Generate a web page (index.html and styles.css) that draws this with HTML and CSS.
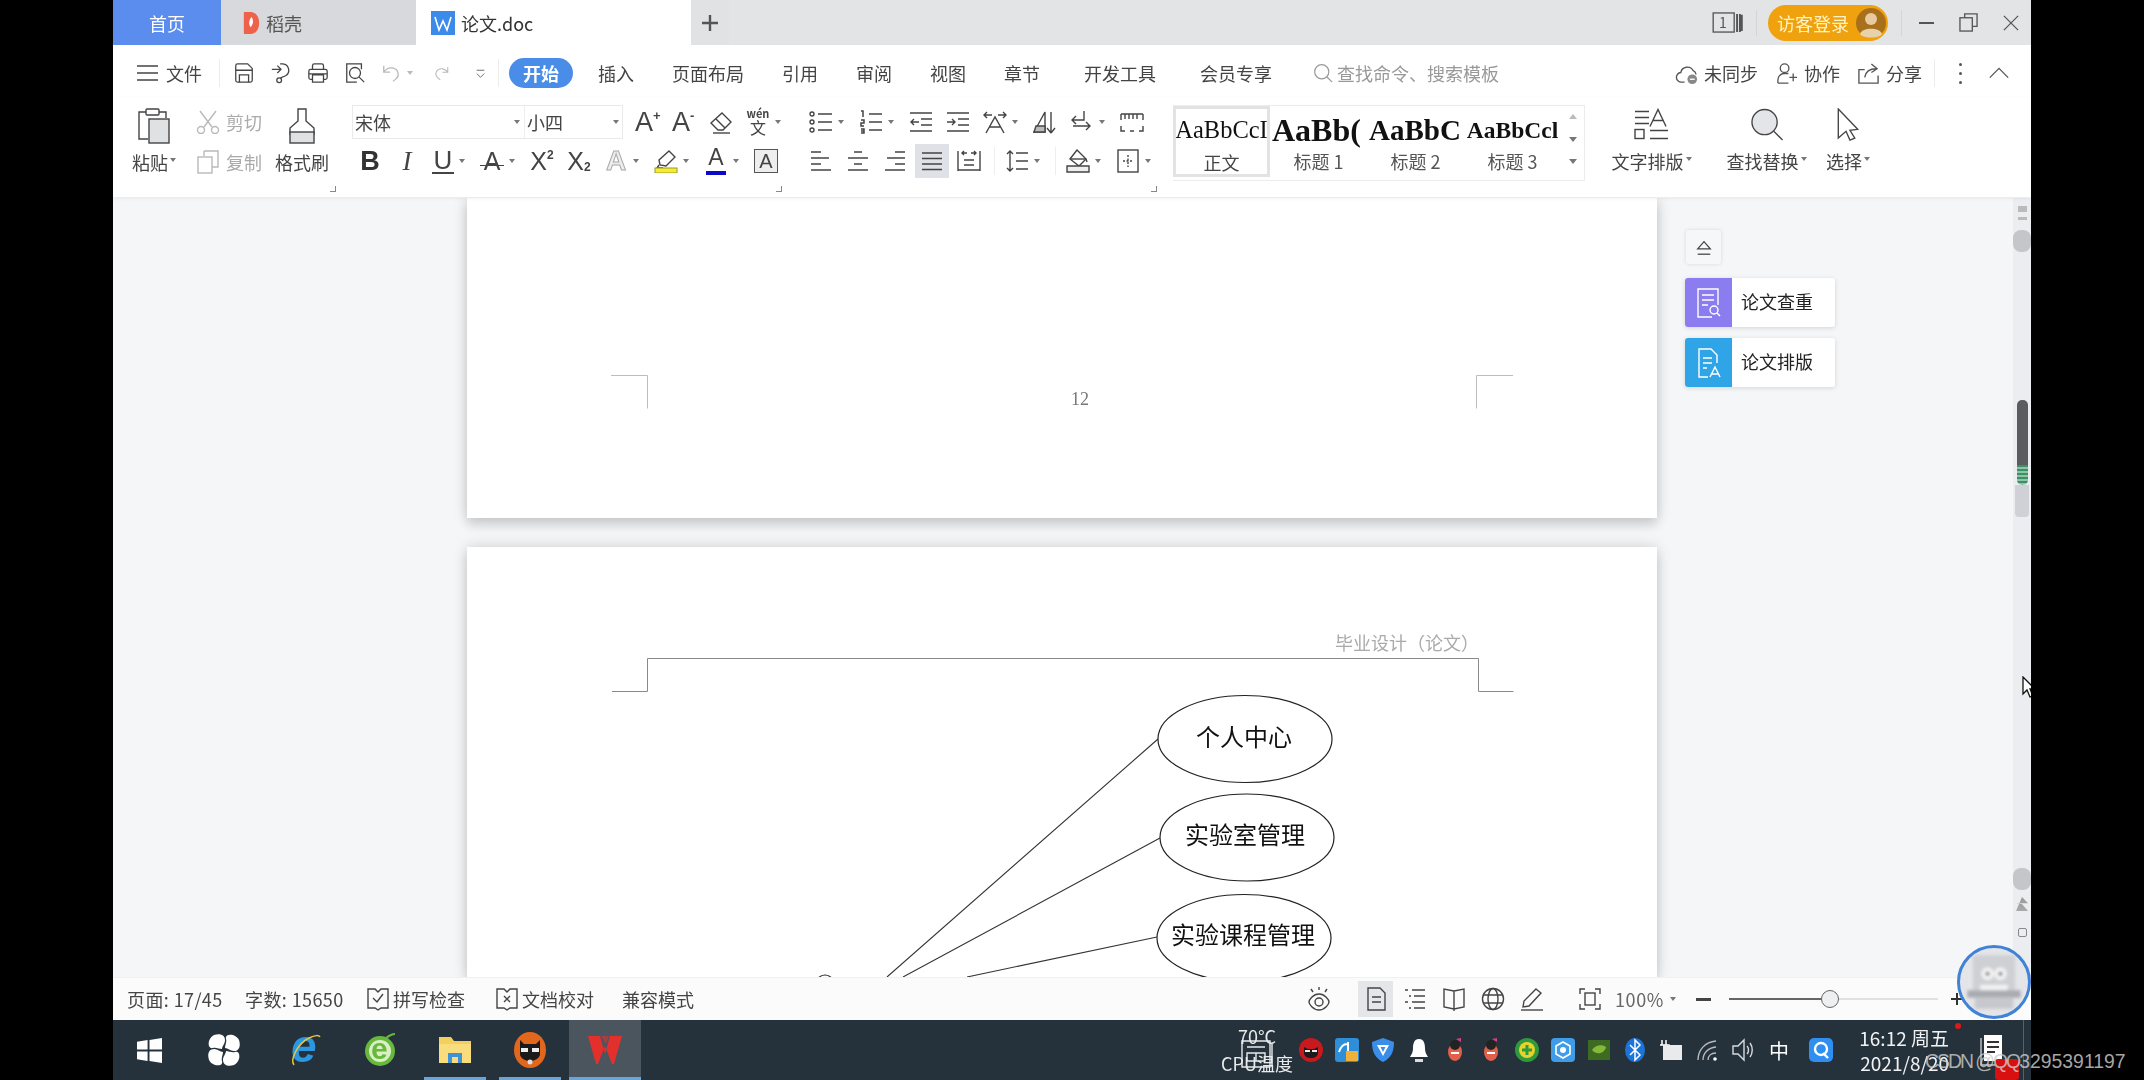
FILE: index.html
```html
<!DOCTYPE html>
<html lang="zh-CN">
<head>
<meta charset="utf-8">
<title>论文.doc</title>
<link rel="stylesheet" href="styles.css">
</head>
<body>
<svg class="sprite" aria-hidden="true">
  <symbol id="save" viewBox="0 0 24 24"><path d="M5 2h11l5 5v13a2 2 0 0 1-2 2H5a2 2 0 0 1-2-2V4a2 2 0 0 1 2-2z"/><path d="M3 9h18M7 22v-8h10v8"/></symbol>
  <symbol id="outp" viewBox="0 0 24 24"><path d="M2 8h10M8 4l4 4-4 4"/><path d="M11 2h3a7 7 0 0 1 3 13l-5 2v1"/><circle cx="10" cy="20" r="2.6"/></symbol>
  <symbol id="print" viewBox="0 0 24 24"><path d="M6 8V4a2 2 0 0 1 2-2h8a2 2 0 0 1 2 2v4"/><path d="M6 19H4a2 2 0 0 1-2-2v-7a2 2 0 0 1 2-2h16a2 2 0 0 1 2 2v7a2 2 0 0 1-2 2h-2"/><path d="M2 13h20M6 14h12v8H6z"/></symbol>
  <symbol id="preview" viewBox="0 0 24 24"><path d="M19 8V2H3v20h11"/><circle cx="12" cy="12" r="6"/><path d="M16.5 16.5L22 22"/></symbol>
  <symbol id="undo" viewBox="0 0 24 24"><path d="M3 4v7h7M3 11c4-6 12-6 15-1 2 4 0 8-5 11"/></symbol>
  <symbol id="redo" viewBox="0 0 24 24"><path d="M21 4v7h-7M21 11c-4-6-12-6-15-1-2 4 0 8 5 11"/></symbol>
  <symbol id="custom" viewBox="0 0 24 24"><path d="M5 6h14M5 12l7 7 7-7"/></symbol>
  <symbol id="search" viewBox="0 0 24 24"><circle cx="10.5" cy="10.5" r="8.5"/><path d="M16.5 16.5L23 23"/></symbol>
  <symbol id="cloud" viewBox="0 0 24 24"><path d="M10 21H7a5 5 0 0 1-1-10 7 7 0 0 1 13-2 5 5 0 0 1 3 4"/><circle cx="18" cy="18" r="5" fill="#888" stroke="none"/><path d="M15.5 18h5" stroke="#fff"/></symbol>
  <symbol id="collab" viewBox="0 0 24 24"><circle cx="10" cy="6.500" r="4.500"/><path d="M3 22v-3a7 7 0 0 1 6-7h5"/><path d="M3 22h11M19 12v8M15 16h8"/></symbol>
  <symbol id="share" viewBox="0 0 24 24"><path d="M8 8H2v14h20v-8"/><path d="M8 16c1-6 5-9 12-9M15 2l6 5-6 4"/></symbol>
  <symbol id="up" viewBox="0 0 24 24"><path d="M2 17l10-10 10 10"/></symbol>
  <symbol id="deck" viewBox="0 0 32 22"><rect x="1" y="1" width="22" height="20"/><path d="M26 2v19M29 2v19M31 3v17" stroke-width="2"/></symbol>
  <symbol id="restore" viewBox="0 0 20 20"><path d="M6 5V1h13v13h-5"/><rect x="1" y="5" width="13" height="14"/></symbol>
  <symbol id="close" viewBox="0 0 18 18"><path d="M1 1l16 16M17 1L1 17"/></symbol>
  <symbol id="paste" viewBox="0 0 32 36"><path d="M8 4H1v27h9"/><path d="M21 4h7v6"/><rect x="8" y="1" width="13" height="6" rx="1"/><rect x="11" y="11" width="20" height="24" fill="#e0e1e3"/></symbol>
  <symbol id="cut" viewBox="0 0 24 24"><path d="M4 1l12 16M20 1L8 17"/><circle cx="5" cy="20" r="3.500"/><circle cx="19" cy="20" r="3.500"/></symbol>
  <symbol id="copy" viewBox="0 0 24 24"><path d="M8 1h14v16H16"/><path d="M8 1v5"/><rect x="2" y="7" width="14" height="16"/></symbol>
  <symbol id="brush" viewBox="0 0 30 36"><path d="M11 1h8v12l8 7v6H3v-6l8-7z"/><rect x="3" y="24" width="24" height="11" fill="#e0e1e3"/></symbol>
  <symbol id="eraser" viewBox="0 0 24 24"><path d="M13 3l9 9-8 8H9l-7-7z"/><path d="M7 9l9 9" /><path d="M4 23h17"/></symbol>
  <symbol id="highlight" viewBox="0 0 24 24"><path d="M15 2l6 6-9 9-6-1-1-5z"/><path d="M5 16l-2 3h6" /><rect x="1" y="19" width="22" height="5" fill="#f4ec2c" stroke="#9a9a30" stroke-width="1"/></symbol>
  <symbol id="bullets" viewBox="0 0 24 24"><circle cx="3" cy="4" r="2"/><circle cx="3" cy="12" r="2"/><circle cx="3" cy="20" r="2"/><path d="M9 4h14M9 12h14M9 20h14"/></symbol>
  <symbol id="numbers" viewBox="0 0 24 24"><path d="M2 1h2v6M2 10h3v3H2v3h3M2 19h3v2H2m3 0v2H2M10 4h13M10 12h13M10 20h13" stroke-width="1.500"/></symbol>
  <symbol id="outdent" viewBox="0 0 24 24"><path d="M1 3h22M12 9h11M12 15h11M1 21h22M10 12H2M5 9l-3 3 3 3"/></symbol>
  <symbol id="indent" viewBox="0 0 24 24"><path d="M1 3h22M12 9h11M12 15h11M1 21h22M1 12h8M6 9l3 3-3 3"/></symbol>
  <symbol id="xa" viewBox="0 0 24 24"><path d="M3 23L12 7l9 16M6 17h12M1 5h8M4 2L1 5l3 3M15 5h8M20 2l3 3-3 3"/></symbol>
  <symbol id="sort" viewBox="0 0 24 24"><path d="M1 22L12 2v20z"/><path d="M3 16h9v6H1z" fill="#bbb"/><path d="M18 2v20M18 23l-4-5M18 23l4-5"/></symbol>
  <symbol id="return" viewBox="0 0 24 24"><path d="M14 1v9H2M6 6l-4 4 4 4M3 16h17M16 12l4 4-4 4"/></symbol>
  <symbol id="ruler" viewBox="0 0 24 24"><path d="M1 4h22M1 4v6M5 4v5M9 4v5M13 4v5M17 4v5M23 4v6M1 16v5h4M23 16v5h-4M10 21h4"/></symbol>
  <symbol id="aleft" viewBox="0 0 24 24"><path d="M2 3h10M2 9h18M2 15h10M2 21h20"/></symbol>
  <symbol id="acenter" viewBox="0 0 24 24"><path d="M8 3h8M2 9h20M8 15h8M2 21h20"/></symbol>
  <symbol id="aright" viewBox="0 0 24 24"><path d="M12 3h10M4 9h18M12 15h10M2 21h20"/></symbol>
  <symbol id="ajust" viewBox="0 0 24 24"><path d="M2 4h20M2 9.500h20M2 15h20M2 20.500h20" stroke-width="1.700"/></symbol>
  <symbol id="distribute" viewBox="0 0 24 24"><path d="M1 2v20M23 2v20M5 4h5M19 4h-5M7 2L5 4l2 2M17 2l2 2-2 2M7 11h10M7 16h10M1 21h22"/></symbol>
  <symbol id="spacing" viewBox="0 0 24 24"><path d="M5 2v20M2 5l3-3 3 3M2 19l3 3 3-3M11 4h12M11 12h12M11 20h12"/></symbol>
  <symbol id="shading" viewBox="0 0 24 24"><path d="M11 1l9 9-7 7-9-7z"/><path d="M4 10h16"/><path d="M1 17h22v6H1z" fill="#eee"/><path d="M20 10l1 3" /></symbol>
  <symbol id="borders" viewBox="0 0 24 24"><rect x="2" y="1" width="20" height="22"/><path d="M12 6v12M7 12h10" stroke-dasharray="2 1.500"/></symbol>
  <symbol id="layout" viewBox="0 0 36 32"><path d="M1 3h14M1 9h14M1 15h14M16 18L24 1l8 17M19 12h10"/><rect x="1" y="21" width="9" height="9"/><path d="M16 22h18M16 30h18"/></symbol>
  <symbol id="bigsearch" viewBox="0 0 34 34"><circle cx="14.500" cy="14.500" r="13" fill="#e4e5e8"/><path d="M24 24l9 9"/></symbol>
  <symbol id="pointer" viewBox="0 0 24 34"><path d="M2 1l20 21-8 1 5 8-5 2-4-9-8 7z"/></symbol>
  <symbol id="eject" viewBox="0 0 20 24"><path d="M3 14l7-8 7 8z"/><path d="M3 20h14"/></symbol>
  <symbol id="docq" viewBox="0 0 26 32"><path d="M16 30H2V2h20v16M6 8h12M6 13h12M6 18h6"/><circle cx="18" cy="23" r="4"/><path d="M21 26l3 3"/></symbol>
  <symbol id="doca" viewBox="0 0 26 32"><path d="M12 30H3V2h12l6 6v8M7 11h9M7 16h9M7 21h4"/><path d="M14 30l5-10 5 10M16 27h6"/></symbol>
  <symbol id="spell" viewBox="0 0 24 24"><path d="M2 2h7l3 3 3-3h7v19H15l-3 2-3-2H2z"/><path d="M7 11l4 4 6-8"/></symbol>
  <symbol id="proof" viewBox="0 0 24 24"><path d="M2 2h7l3 3 3-3h7v19H15l-3 2-3-2H2z"/><path d="M9 9l6 6M15 9l-6 6"/></symbol>
  <symbol id="eye" viewBox="0 0 24 24"><path d="M12 7c6 0 10 6 10 8s-4 8-10 8S2 17 2 15s4-8 10-8z"/><circle cx="12" cy="15" r="4"/><path d="M4 2l2 3M12 0v3M20 2l-2 3"/></symbol>
  <symbol id="vdoc" viewBox="0 0 24 24"><path d="M4 1h12l5 5v17H4zM8 10h9M8 15h9"/></symbol>
  <symbol id="voutline" viewBox="0 0 24 24"><path d="M2 3h3M9 3h13M6 9h2M11 9h11M2 15h3M9 15h13M6 21h2M11 21h11"/></symbol>
  <symbol id="vbook" viewBox="0 0 24 24"><path d="M12 4L2 2v18l10 2 10-2V2zM12 4v20"/></symbol>
  <symbol id="vglobe" viewBox="0 0 24 24"><circle cx="12" cy="12" r="10.500"/><ellipse cx="12" cy="12" rx="5" ry="10.500"/><path d="M2 8h20M2 16h20"/></symbol>
  <symbol id="vpen" viewBox="0 0 24 24"><path d="M16 2l5 4-12 13-6 1 1-6z"/><path d="M1 23h22"/></symbol>
  <symbol id="fit" viewBox="0 0 24 24"><path d="M2 7V2h5M17 2h5v5M22 17v5h-5M7 22H2v-5"/><rect x="7" y="6" width="10" height="12"/></symbol>
  <symbol id="notif" viewBox="0 0 24 32"><path d="M4 1h18v26H4z" fill="#fff" stroke="none"/><path d="M1 4v27h14" stroke="#c0c4c8" fill="none"/><path d="M7 8h12M7 13h12M7 18h8" stroke="#333" stroke-width="2"/></symbol>
  <symbol id="penguin" viewBox="0 0 24 24"><ellipse cx="12" cy="14" rx="7" ry="9" fill="#e0604c" stroke="none"/><circle cx="12" cy="7" r="5" fill="#222" stroke="none"/><path d="M8 15h8" stroke="#fff" stroke-width="2"/><path d="M13 1l5-1v4z" fill="#d83c8c" stroke="none"/></symbol>
</svg>

<div class="screen">
  <div class="window">

    <header class="tabbar">
      <div class="tab tab-home">首页</div>
      <div class="tab tab-daoke">
        <svg class="logo-daoke" viewBox="0 0 20 28"><path d="M1 1h8c6 0 10 6 10 13s-4 13-10 13H1z" fill="#f0614c"/><path d="M10 7c2 3 3 7-1 12-2-3-3-7 1-12z" fill="#fff"/></svg>
        <span>稻壳</span>
      </div>
      <div class="tab tab-doc">
        <svg class="logo-doc" viewBox="0 0 24 24"><rect width="24" height="24" fill="#3d8be8"/><path d="M4 6l4 13 4-9 4 9 4-13" fill="none" stroke="#fff" stroke-width="1.600"/></svg>
        <span>论文.doc</span>
      </div>
      <div class="tab tab-plus">
        <svg class="plus-icon" viewBox="0 0 18 18"><path d="M9 1v16M1 9h16" stroke="#555" stroke-width="2.400"/></svg>
      </div>
      <div class="tab-right">
        <span class="deck-wrap"><svg class="ic deck"><use href="#deck"/></svg><span class="deck-num">1</span></span>
        <i class="vsep"></i>
        <div class="login">
          <span>访客登录</span>
          <svg class="avatar" viewBox="0 0 30 30"><circle cx="15" cy="15" r="15" fill="#a8701a"/><circle cx="15" cy="11" r="6" fill="#e8c9a0"/><path d="M4 26c2-7 20-7 22 0-4 5-18 5-22 0z" fill="#e8d2ac"/></svg>
        </div>
        <i class="vsep vsep-b"></i>
        <i class="win-min"></i>
        <svg class="ic win-restore"><use href="#restore"/></svg>
        <svg class="ic win-close"><use href="#close"/></svg>
      </div>
    </header>

    <nav class="menubar">
      <div class="file-btn">
        <svg class="hamburger" viewBox="0 0 21 16"><path d="M0 1h21M0 8h21M0 15h21" stroke="#444" stroke-width="1.500"/></svg>
        <span>文件</span>
      </div>
      <i class="msep"></i>
      <div class="quick">
        <svg class="ic"><use href="#save"/></svg>
        <svg class="ic"><use href="#outp"/></svg>
        <svg class="ic"><use href="#print"/></svg>
        <svg class="ic"><use href="#preview"/></svg>
        <span class="undo-wrap"><svg class="ic ic-faint"><use href="#undo"/></svg><i class="caret caret-faint"></i></span>
        <svg class="ic ic-faint ic-redo"><use href="#redo"/></svg>
        <svg class="ic ic-small"><use href="#custom"/></svg>
      </div>
      <i class="msep msep-b"></i>
      <div class="menu-items">
        <span class="pill">开始</span>
        <span class="mi mi-first">插入</span>
        <span class="mi">页面布局</span>
        <span class="mi">引用</span>
        <span class="mi">审阅</span>
        <span class="mi">视图</span>
        <span class="mi">章节</span>
        <span class="mi mi-wide">开发工具</span>
        <span class="mi mi-wide">会员专享</span>
      </div>
      <div class="find">
        <svg class="ic ic-find"><use href="#search"/></svg>
        <span>查找命令、搜索模板</span>
      </div>
      <div class="menu-right">
        <span class="mr-item"><svg class="ic"><use href="#cloud"/></svg>未同步</span>
        <span class="mr-item"><svg class="ic"><use href="#collab"/></svg>协作</span>
        <span class="mr-item"><svg class="ic"><use href="#share"/></svg>分享</span>
        <i class="msep"></i>
        <span class="kebab"><i></i><i></i><i></i></span>
        <svg class="ic ic-chev"><use href="#up"/></svg>
      </div>
    </nav>

    <section class="ribbon">
      <div class="group g-clip">
        <div class="bigcol col-paste">
          <svg class="ic big-paste"><use href="#paste"/></svg>
          <span class="biglabel">粘贴<i class="caret"></i></span>
        </div>
        <div class="col-cut">
          <span class="cut-row"><svg class="ic ic-faint"><use href="#cut"/></svg>剪切</span>
          <span class="cut-row"><svg class="ic ic-faint"><use href="#copy"/></svg>复制</span>
        </div>
        <div class="bigcol col-brush">
          <svg class="ic big-brush"><use href="#brush"/></svg>
          <span class="biglabel">格式刷</span>
        </div>
        <i class="launcher"></i>
      </div>

      <div class="group g-font">
        <div class="row row-a">
          <div class="fontbox">
            <span class="fb-name">宋体<i class="caret"></i></span>
            <span class="fb-size">小四<i class="caret"></i></span>
          </div>
          <span class="gl gl-a">A<sup>+</sup></span>
          <span class="gl gl-a">A<sup>-</sup></span>
          <svg class="ic"><use href="#eraser"/></svg>
          <span class="gl gl-wen"><b>wén</b><em>文</em></span>
          <i class="caret"></i>
        </div>
        <div class="row row-b">
          <span class="gl gl-bold">B</span>
          <span class="gl gl-italic">I</span>
          <span class="gl gl-under">U</span>
          <i class="caret"></i>
          <span class="gl gl-strike">A</span>
          <i class="caret"></i>
          <span class="gl gl-x">X<sup>2</sup></span>
          <span class="gl gl-x">X<sub>2</sub></span>
          <span class="gl gl-outline">A</span>
          <i class="caret"></i>
          <svg class="ic"><use href="#highlight"/></svg>
          <i class="caret"></i>
          <span class="gl gl-color">A</span>
          <i class="caret"></i>
          <span class="gl gl-box">A</span>
        </div>
        <i class="launcher"></i>
      </div>

      <div class="group g-para">
        <div class="row">
          <svg class="ic"><use href="#bullets"/></svg><i class="caret"></i>
          <svg class="ic"><use href="#numbers"/></svg><i class="caret"></i>
          <svg class="ic"><use href="#outdent"/></svg>
          <svg class="ic"><use href="#indent"/></svg>
          <svg class="ic"><use href="#xa"/></svg><i class="caret"></i>
          <svg class="ic"><use href="#sort"/></svg>
          <svg class="ic"><use href="#return"/></svg><i class="caret"></i>
          <svg class="ic"><use href="#ruler"/></svg>
        </div>
        <div class="row">
          <svg class="ic"><use href="#aleft"/></svg>
          <svg class="ic"><use href="#acenter"/></svg>
          <svg class="ic"><use href="#aright"/></svg>
          <span class="active-cell"><svg class="ic"><use href="#ajust"/></svg></span>
          <svg class="ic"><use href="#distribute"/></svg>
          <i class="rsep"></i>
          <svg class="ic"><use href="#spacing"/></svg><i class="caret"></i>
          <i class="rsep"></i>
          <svg class="ic"><use href="#shading"/></svg><i class="caret"></i>
          <svg class="ic"><use href="#borders"/></svg><i class="caret"></i>
        </div>
        <i class="launcher"></i>
      </div>

      <div class="styles">
        <div class="style-cell style-on"><span class="sample s-normal">AaBbCcI</span><span class="slabel">正文</span></div>
        <div class="style-cell"><span class="sample s-h1">AaBb(</span><span class="slabel">标题 1</span></div>
        <div class="style-cell"><span class="sample s-h2">AaBbC</span><span class="slabel">标题 2</span></div>
        <div class="style-cell"><span class="sample s-h3">AaBbCcl</span><span class="slabel">标题 3</span></div>
        <div class="style-scroll"><i class="tri-up"></i><i class="tri-down"></i><i class="tri-more"></i></div>
      </div>

      <div class="tools">
        <div class="bigcol col-layout">
          <svg class="ic big-tool"><use href="#layout"/></svg>
          <span class="biglabel">文字排版<i class="caret"></i></span>
        </div>
        <div class="bigcol col-replace">
          <svg class="ic big-tool"><use href="#bigsearch"/></svg>
          <span class="biglabel">查找替换<i class="caret"></i></span>
        </div>
        <div class="bigcol col-select">
          <svg class="ic big-tool"><use href="#pointer"/></svg>
          <span class="biglabel">选择<i class="caret"></i></span>
        </div>
      </div>
    </section>

    <main class="docarea">
      <div class="pages">
        <article class="page page-a">
          <svg class="page-art" viewBox="0 0 1190 320">
            <path d="M144 177.500h36.500v33M1046 177.500h-36.500v33" fill="none" stroke="#bdbdbd"/>
            <text class="pnum" x="613" y="207" text-anchor="middle">12</text>
          </svg>
        </article>
        <article class="page page-b">
          <svg class="page-art" viewBox="0 0 1190 430">
            <text class="phead" x="1012" y="103" text-anchor="end">毕业设计（论文）</text>
            <path d="M145 144.500h35.500v-33h831v33h35" fill="none" stroke="#8a8a8a"/>
            <g fill="#fff" stroke="#222" stroke-width="1.200">
              <ellipse cx="778" cy="192" rx="87" ry="43.500"/>
              <ellipse cx="780" cy="290.500" rx="87" ry="43.500"/>
              <ellipse cx="777" cy="391" rx="87" ry="43.500"/>
              <circle cx="358" cy="437" r="9"/>
            </g>
            <path d="M691 192L420 430M693 291L436 430M690 390L500 430" fill="none" stroke="#333" stroke-width="1.100"/>
            <text class="ptext" x="777" y="199" text-anchor="middle">个人中心</text>
            <text class="ptext" x="778" y="297" text-anchor="middle">实验室管理</text>
            <text class="ptext" x="776" y="397" text-anchor="middle">实验课程管理</text>
          </svg>
        </article>
      </div>

      <aside class="sidepanel">
        <button class="collapse"><svg class="ic ic-eject"><use href="#eject"/></svg></button>
        <div class="sidecard">
          <span class="sc-icon sc-violet"><svg class="ic ic-white"><use href="#docq"/></svg></span>
          <span class="sc-text">论文查重</span>
        </div>
        <div class="sidecard">
          <span class="sc-icon sc-blue"><svg class="ic ic-white"><use href="#doca"/></svg></span>
          <span class="sc-text">论文排版</span>
        </div>
      </aside>

      <div class="scrollbar">
        <i class="sb-top"></i>
        <i class="sb-pill"></i>
        <div class="sb-thumb"><i class="sb-dark"></i><i class="sb-green"></i><i class="sb-light"></i></div>
        <i class="sb-pill sb-pill-low"></i>
        <i class="sb-dbl"></i>
        <i class="sb-square"></i>
      </div>
    </main>

    <footer class="statusbar">
      <div class="st-left">
        <span class="st-page">页面: 17/45</span>
        <span class="st-count">字数: 15650</span>
        <span class="st-tool"><svg class="ic"><use href="#spell"/></svg>拼写检查</span>
        <span class="st-tool st-proof"><svg class="ic"><use href="#proof"/></svg>文档校对</span>
        <span class="st-compat">兼容模式</span>
      </div>
      <div class="st-right">
        <svg class="ic ic-eye"><use href="#eye"/></svg>
        <div class="views">
          <span class="view view-on"><svg class="ic"><use href="#vdoc"/></svg></span>
          <span class="view"><svg class="ic"><use href="#voutline"/></svg></span>
          <span class="view"><svg class="ic"><use href="#vbook"/></svg></span>
          <span class="view"><svg class="ic"><use href="#vglobe"/></svg></span>
          <span class="view"><svg class="ic"><use href="#vpen"/></svg></span>
        </div>
        <svg class="ic ic-fit"><use href="#fit"/></svg>
        <span class="zoomval">100%<i class="caret"></i></span>
        <i class="zoom-minus"></i>
        <div class="slider"><i class="knob"></i></div>
        <svg class="zoom-plus" viewBox="0 0 12 12"><path d="M6 0v12M0 6h12" stroke="#333" stroke-width="2"/></svg>
      </div>
    </footer>

    <div class="taskbar">
      <div class="tb-left">
        <span class="tb-cell">
          <svg class="tb-ic" viewBox="0 0 26 26"><path d="M0 4l11-2v10H0zM13 2l13-2v12H13zM0 14h11v10L0 22zM13 14h13v12l-13-2z" fill="#fff"/></svg>
        </span>
        <span class="tb-cell">
          <svg class="tb-ic tb-ic-fan" viewBox="0 0 32 32"><path d="M6 1c6-2 11 0 11 5 0 4-3 6-3 9-3 0-6-2-9-1C1 15 0 11 1 7c1-3 3-5 5-6zM31 6c2 6 0 11-5 11-4 0-6-3-9-3 0-3 2-6 1-9-1-4 3-5 7-4 3 1 5 3 6 5zM26 31c-6 2-11 0-11-5 0-4 3-6 3-9 3 0 6 2 9 1 4-1 5 3 4 7-1 3-3 5-5 6zM1 26c-2-6 0-11 5-11 4 0 6 3 9 3 0 3-2 6-1 9 1 4-3 5-7 4-3-1-5-3-6-5z" fill="#fff"/></svg>
        </span>
        <span class="tb-cell tb-shift">
          <svg class="tb-ic tb-ic-app" viewBox="0 0 36 36"><text x="4" y="30" class="ie-e">e</text><path d="M7 33C3 28 10 12 22 6c6-3 10-3 11-1" fill="none" stroke="#e8c53a" stroke-width="1.500"/></svg>
        </span>
        <span class="tb-cell">
          <svg class="tb-ic tb-ic-app" viewBox="0 0 36 36"><circle cx="18" cy="19" r="15" fill="#67b83c"/><circle cx="18" cy="19" r="11" fill="#d9f0c6"/><text x="9" y="27" class="se-e">e</text><path d="M24 6c4-3 7-4 9-4" stroke="#67b83c" stroke-width="2" fill="none"/></svg>
        </span>
        <span class="tb-cell tb-run">
          <svg class="tb-ic tb-ic-app" viewBox="0 0 36 36"><path d="M2 5h12l3 4h17v22H2z" fill="#f5cf5e"/><path d="M2 12h32v19H2z" fill="#f9dc7c"/><path d="M11 31V21h14v10h-4v-6h-6v6z" fill="#3f92d8"/></svg>
        </span>
        <span class="tb-cell tb-run">
          <svg class="tb-ic tb-ic-app" viewBox="0 0 36 36"><ellipse cx="18" cy="18" rx="16" ry="18" fill="#e2661c"/><path d="M8 8l4 4h12l4-4v14c0 4-5 7-10 7s-10-3-10-7z" fill="#1a1a1a"/><path d="M9 16h7v4H9zM20 16h7v4h-7z" fill="#eee"/><circle cx="18" cy="30" r="2.500" fill="#ddd"/></svg>
        </span>
        <span class="tb-cell tb-active">
          <svg class="tb-ic tb-ic-app" viewBox="0 0 36 36"><path d="M1 4h12l5 18 5-18h12l-8 28H25l-7-18-7 18H9z" fill="#e3302c"/><path d="M14 4h8l-3 8z" fill="#e3302c" opacity=".6"/></svg>
        </span>
      </div>
      <div class="tray">
        <div class="temp">
          <span>70°C</span>
          <span>CPU温度</span>
          <svg class="temp-ic" viewBox="0 0 34 28"><path d="M1 1h28v26H1zM6 7h18M6 13h18v8H6zM15 13v8M31 3v24" fill="none" stroke="#e8eaec" stroke-width="1.400"/></svg>
        </div>
        <div class="tray-icons">
          <svg class="tr" viewBox="0 0 24 24"><ellipse cx="12" cy="12" rx="12" ry="12" fill="#c8191e"/><path d="M5 9l4 2h6l4-2v6c0 3-3 5-7 5s-7-2-7-5z" fill="#1c1c1c"/><path d="M6 12h5v2H6zM13 12h5v2h-5z" fill="#eee"/></svg>
          <svg class="tr" viewBox="0 0 24 24"><rect width="24" height="24" rx="3" fill="#2e8fd8"/><path d="M4 14c2-6 5-8 8-8M13 4v10" stroke="#fff" stroke-width="2" fill="none"/><rect x="11" y="13" width="12" height="10" fill="#f0b03c"/></svg>
          <svg class="tr" viewBox="0 0 24 24"><path d="M12 0l11 4c0 10-3 16-11 20C4 20 1 14 1 4z" fill="#3a8eea"/><path d="M6 7h12l-6 11z" fill="#fff"/><path d="M9.500 9h5l-2.500 5z" fill="#3a8eea"/></svg>
          <svg class="tr" viewBox="0 0 24 24"><path d="M12 1c5 0 6 5 6 9 0 5 2 7 3 9H3c1-2 3-4 3-9 0-4 1-9 6-9z" fill="#fff"/><rect x="8" y="21" width="8" height="3" fill="#ddd"/></svg>
          <svg class="tr"><use href="#penguin"/></svg>
          <svg class="tr"><use href="#penguin"/></svg>
          <svg class="tr" viewBox="0 0 24 24"><circle cx="12" cy="12" r="12" fill="#2e9a3c"/><circle cx="12" cy="12" r="8" fill="#e8d32c"/><path d="M12 7v10M7 12h10" stroke="#2e9a3c" stroke-width="3"/></svg>
          <svg class="tr" viewBox="0 0 24 24"><rect width="24" height="24" rx="4" fill="#3f9ce8"/><path d="M12 4l7 4v8l-7 4-7-4V8z" fill="none" stroke="#fff" stroke-width="1.600"/><circle cx="12" cy="12" r="3" fill="#fff"/></svg>
          <svg class="tr" viewBox="0 0 24 24"><rect x="1" y="2" width="22" height="20" fill="#3d6b22"/><path d="M5 12c3-5 10-6 14-3-1 6-9 9-14 3z" fill="#86b83c"/></svg>
          <svg class="tr" viewBox="0 0 24 24"><ellipse cx="12" cy="12" rx="10" ry="12" fill="#1c73d8"/><path d="M7 7l10 10-5 5V2l5 5L7 17" fill="none" stroke="#fff" stroke-width="1.500"/></svg>
          <svg class="tr" viewBox="0 0 24 24"><path d="M3 2v5M7 2v5M1 7h9v6" fill="none" stroke="#fff" stroke-width="1.500"/><rect x="4" y="7" width="19" height="15" fill="#e8eaec"/></svg>
          <svg class="tr" viewBox="0 0 24 24"><path d="M3 22C3 12 10 4 21 3M8 22c0-7 5-12 13-13M13 22c0-4 3-7 8-7" fill="none" stroke="#b8bcc0" stroke-width="1.400"/><circle cx="20" cy="21" r="1.800" fill="#fff"/></svg>
          <svg class="tr" viewBox="0 0 24 24"><path d="M2 8h5l6-6v20l-6-6H2zM16 8c2 2 2 6 0 8M19 5c3 4 3 10 0 14" fill="none" stroke="#d8dade" stroke-width="1.400"/></svg>
          <span class="tr tr-ime">中</span>
          <svg class="tr tr-q" viewBox="0 0 24 24"><rect y="0" width="24" height="24" rx="5" fill="#2f8ff0"/><circle cx="12" cy="11" r="6" fill="none" stroke="#fff" stroke-width="2.400"/><path d="M14 15l5 5" stroke="#fff" stroke-width="2.400"/></svg>
        </div>
        <div class="clock"><span>16:12 周五</span><span>2021/8/20</span></div>
        <svg class="ic notif"><use href="#notif"/></svg>
      </div>
    </div>
  </div>

  <i class="red-dot"></i>
  <i class="red-blob"></i>
  <div class="watermark"><span class="wm-tight">CSDN @QQ</span>3295391197</div>
  <div class="assistant">
    <svg class="assist-art" viewBox="0 0 74 74"><rect x="14" y="8" width="46" height="38" fill="#cfd0d4"/><circle cx="30" cy="28" r="7" fill="#f2f2f4"/><circle cx="44" cy="28" r="7" fill="#f2f2f4"/><circle cx="30" cy="28" r="2" fill="#777"/><circle cx="44" cy="28" r="2" fill="#777"/><rect x="8" y="46" width="58" height="8" fill="#a9abb0"/><rect x="16" y="54" width="42" height="12" fill="#c6c8cc"/><rect x="22" y="40" width="30" height="6" fill="#f2f2f4"/></svg>
  </div>
  <svg class="mouse" viewBox="0 0 14 22"><path d="M1 1l12 12H8l3 7-3 1-3-7-4 4z" fill="#fff" stroke="#111" stroke-width="1.300"/></svg>
</div>
</body>
</html>
```

FILE: styles.css
```css
* { box-sizing: border-box; }
html, body { margin: 0; padding: 0; background: #000; }
body { font-family: "Noto Sans CJK SC", "Noto Sans", sans-serif; font-size: 18px; color: #444; }
i, em { font-style: normal; }
.sprite { position: absolute; width: 0; height: 0; }
.screen { position: relative; width: 2144px; height: 1080px; overflow: hidden; background: #000; }
.window { width: 1918px; height: 1080px; margin-left: 113px; display: flex; flex-direction: column; background: #fff; filter: blur(.3px); }

.ic { width: 24px; height: 24px; flex: none; fill: none; stroke: #444; stroke-width: 1.4; }
.ic-faint { stroke: #b9b9b9; }
.ic-white { stroke: #fff; width: 26px; height: 32px; }

.caret { display: inline-block; flex: none; width: 6px; height: 4px; border-left: 3px solid transparent; border-right: 3px solid transparent; border-top: 4px solid #777; margin-left: -8px; margin-right: 2px; }

/* tab bar */
.tabbar { height: 45px; flex: none; display: flex; background: #e3e4e6; }
.tab { height: 45px; display: flex; align-items: center; flex: none; }
.tab-home { width: 108px; background: #5b8def; color: #fff; justify-content: center; }
.tab-daoke { width: 195px; background: #d8d9dc; padding-left: 22px; gap: 6px; color: #555; }
.logo-daoke { width: 17px; height: 24px; }
.tab-doc { width: 275px; background: #fff; padding-left: 15px; gap: 6px; color: #333; }
.logo-doc { width: 24px; height: 24px; }
.tab-plus { width: 38px; justify-content: center; background: #e1e2e4; }
.plus-icon { width: 18px; height: 18px; }
.tab-right { margin-left: auto; display: flex; align-items: center; padding-right: 12px; }
.deck-wrap { position: relative; display: flex; }
.deck { width: 31px; height: 21px; stroke: #555; }
.deck-num { position: absolute; left: 0; top: -2px; width: 22px; text-align: center; font-size: 14px; line-height: 24px; color: #555; }
.vsep { width: 1px; height: 26px; background: #d4d5d8; margin: 0 11px 0 13px; }
.vsep-b { margin: 0 17px 0 13px; }
.login { width: 120px; height: 36px; border-radius: 18px; background: #f0a20e; display: flex; align-items: center; padding-left: 9px; gap: 7px; color: #fff3c4; }
.avatar { width: 30px; height: 30px; }
.win-min { width: 15px; height: 2px; background: #555; }
.win-restore { width: 19px; height: 19px; margin-left: 25px; stroke: #555; }
.win-close { width: 16px; height: 16px; margin-left: 25px; stroke: #555; }

/* menu row */
.menubar { height: 52px; flex: none; display: flex; align-items: center; padding-left: 24px; padding-right: 21px; padding-top: 4px; background: #fff; }
.file-btn { display: flex; align-items: center; gap: 8px; }
.hamburger { width: 21px; height: 16px; }
.msep { width: 1px; height: 28px; background: #ececec; margin: 0 13px 0 17px; }
.msep-b { margin: 0 10px 0 11px; }
.quick { display: flex; align-items: center; gap: 15px; }
.quick .ic { width: 22px; height: 22px; }
.quick .ic-small { width: 13px; height: 13px; margin-left: 9px; }
.quick .ic-redo { width: 18px; height: 18px; margin-left: 4px; }
.undo-wrap { display: flex; align-items: center; }
.undo-wrap .caret { margin-left: 4px; margin-right: 0; }
.caret-faint { border-top-color: #bbb; }
.menu-items { display: flex; align-items: center; gap: 38px; }
.pill { width: 64px; height: 30px; border-radius: 15px; background: #4a8de8; color: #fff; font-weight: 700; display: flex; align-items: center; justify-content: center; }
.mi-first { margin-left: -13px; }
.mi-wide { margin-left: 6px; }
.find { display: flex; align-items: center; gap: 4px; margin-left: 41px; color: #999; }
.ic-find { width: 20px; height: 20px; stroke: #999; }
.menu-right { margin-left: auto; display: flex; align-items: center; gap: 17px; }
.mr-item { display: flex; align-items: center; gap: 6px; }
.mr-item .ic { width: 23px; height: 23px; stroke: #555; }
.menu-right .msep { margin: 0 7px 0 -5px; }
.kebab { display: flex; flex-direction: column; gap: 6px; }
.kebab i { width: 3px; height: 3px; background: #555; border-radius: 50%; }
.ic-chev { width: 22px; height: 22px; margin-left: 9px; stroke: #555; }

/* ribbon */
.ribbon { height: 101px; flex: none; display: flex; background: #fff; border-bottom: 1px solid #ecedef; box-shadow: 0 1px 3px rgba(0,0,0,.05); position: relative; z-index: 2; }
.group { position: relative; flex: none; }
.launcher { position: absolute; right: 8px; bottom: 5px; width: 6px; height: 6px; border-right: 1px solid #888; border-bottom: 1px solid #888; }
.g-clip { width: 230px; display: flex; padding-left: 17px; }
.bigcol { display: flex; flex-direction: column; align-items: center; flex: none; padding-top: 11px; }
.biglabel { display: flex; align-items: center; height: 24px; margin-top: 6px; white-space: nowrap; }
.biglabel .caret { margin-left: 2px; margin-right: 0; margin-top: -4px; }
.col-paste { width: 48px; }
.big-paste { width: 32px; height: 36px; }
.col-cut { width: 66px; margin-left: 18px; display: flex; flex-direction: column; padding-top: 13px; gap: 16px; color: #aaa; }
.cut-row { display: flex; align-items: center; gap: 6px; height: 24px; }
.col-brush { width: 54px; margin-left: 13px; }
.big-brush { width: 30px; height: 36px; }
.g-clip .launcher { right: 7px; }

.g-font { width: 447px; padding-top: 8px; display: flex; flex-direction: column; gap: 5px; padding-left: 15px; }
.g-para { width: 375px; padding-top: 8px; display: flex; flex-direction: column; gap: 5px; padding-left: 19px; }
.row { height: 34px; display: flex; align-items: center; gap: 13px; }
.row-a { margin-left: -6px; gap: 13px; }
.fontbox { width: 271px; height: 34px; display: flex; border: 1px solid #eaeaea; margin-right: -1px; }
.fb-name { width: 172px; display: flex; align-items: center; justify-content: space-between; padding: 0 4px 0 2px; border-right: 1px solid #eee; }
.fb-size { flex: 1; display: flex; align-items: center; justify-content: space-between; padding: 0 3px 0 2px; }
.fontbox .caret { margin: 0; }

.gl { width: 24px; height: 28px; flex: none; display: flex; align-items: center; justify-content: center; font-family: "Liberation Sans", sans-serif; color: #444; line-height: 1; position: relative; }
.gl-a { font-size: 27px; font-weight: 400; justify-content: flex-start; }
.gl-a sup { font-size: 13px; font-weight: 700; align-self: flex-start; margin-top: 1px; }
.gl-wen { flex-direction: column; font-family: "Noto Sans CJK SC", sans-serif; }
.gl-wen b { font-size: 11px; font-weight: 700; line-height: 11px; }
.gl-wen em { font-size: 16px; line-height: 17px; }
.gl-bold { font-size: 27px; font-weight: 700; color: #333; }
.gl-italic { font-family: "Liberation Serif", serif; font-style: italic; font-size: 27px; }
.gl-under { font-size: 26px; border-bottom: 2px solid #444; height: 26px; width: 22px; }
.gl-strike { font-size: 25px; }
.gl-strike::after { content: ""; position: absolute; left: 0; right: 0; top: 18px; height: 1px; background: #444; }
.gl-x { font-size: 25px; }
.gl-x sup, .gl-x sub { font-size: 12px; font-weight: 700; }
.gl-x sup { align-self: flex-start; margin-top: 2px; }
.gl-x sub { align-self: flex-end; margin-bottom: 2px; }
.gl-outline { font-size: 28px; font-weight: 700; color: #eee; -webkit-text-stroke: 1px #aaa; }
.gl-color { font-size: 23px; height: 30px; align-items: flex-start; }
.gl-color::after { content: ""; position: absolute; left: 2px; right: 2px; bottom: 1px; height: 4px; background: #0a0ac8; }
.gl-box { font-size: 20px; border: 1px solid #555; background: #eee; height: 24px; }

.active-cell { width: 34px; height: 34px; margin: 0 -5px; display: flex; align-items: center; justify-content: center; background: #dfe1e6; flex: none; }
.rsep { width: 1px; height: 28px; background: #eee; margin-right: -3px; flex: none; }

.styles { width: 412px; height: 76px; margin: 8px 0 0 8px; display: flex; flex: none; border: 1px solid #ececec; border-left: 0; }
.style-cell { width: 97px; height: 75px; flex: none; display: flex; flex-direction: column; align-items: center; overflow: hidden; padding-top: 6px; }
.style-on { height: 71px; border: 3px solid #e2e3e5; padding-top: 3px; }
.sample { display: block; width: 93px; height: 36px; line-height: 36px; overflow: hidden; white-space: nowrap; text-align: center; font-family: "Liberation Serif", serif; color: #111; }
.s-normal { font-size: 24.500px; }
.s-h1 { font-size: 32px; font-weight: 700; text-align: left; }
.s-h2 { font-size: 29px; font-weight: 700; text-align: left; }
.s-h3 { font-size: 23.500px; font-weight: 700; }
.slabel { font-size: 18px; line-height: 24px; color: #555; margin-top: 1px; }
.style-on .slabel { margin-top: 3px; color: #444; }
.style-scroll { width: 24px; display: flex; flex-direction: column; align-items: center; padding-top: 8px; }
.style-scroll i { width: 0; height: 0; border-left: 4px solid transparent; border-right: 4px solid transparent; }
.tri-up { border-bottom: 5px solid #bbb; }
.tri-down { border-top: 5px solid #777; margin-top: 18px; }
.tri-more { border-top: 5px solid #777; margin-top: 17px; position: relative; }

.tools { display: flex; flex: none; margin-left: 24px; }
.big-tool { width: 36px; height: 33px; }
.col-layout { width: 85px; }
.col-replace { width: 85px; margin-left: 30px; }
.col-select { width: 50px; margin-left: 14px; }
.tools .biglabel { margin-top: 8px; }

/* document */
.docarea { height: 779px; flex: none; display: flex; background: #f5f6f8; overflow: hidden; position: relative; }
.pages { width: 1190px; margin-left: 354px; flex: none; display: flex; flex-direction: column; gap: 29px; }
.page { width: 1190px; flex: none; background: #fff; box-shadow: 0 0 14px rgba(0,0,0,.16), 0 8px 10px rgba(0,0,0,.1); }
.page-a { height: 320px; }
.page-b { height: 430px; }
.page-art { display: block; width: 100%; height: 100%; }
.pnum { font-family: "Liberation Serif", serif; font-size: 18px; fill: #777; }
.phead { font-family: "Noto Sans CJK SC", sans-serif; font-size: 18px; fill: #aaa; }
.ptext { font-family: "Noto Sans CJK SC", sans-serif; font-size: 24px; fill: #111; }

.sidepanel { width: 150px; margin-left: 28px; flex: none; padding-top: 32px; display: flex; flex-direction: column; }
.collapse { width: 35px; height: 34px; padding: 0; margin: 0 0 14px 1px; border: 0; border-radius: 3px; background: #f6f7f9; box-shadow: 0 0 4px rgba(0,0,0,.12); display: flex; align-items: center; justify-content: center; }
.ic-eject { width: 18px; height: 22px; }
.sidecard { width: 150px; height: 49px; margin-bottom: 11px; display: flex; align-items: center; background: #fff; border-radius: 3px; box-shadow: 0 1px 5px rgba(0,0,0,.14); color: #222; overflow: hidden; }
.sc-icon { width: 47px; height: 49px; display: flex; align-items: center; justify-content: center; flex: none; }
.sc-violet { background: #8b7cf0; }
.sc-blue { background: #2fa5e8; }
.sc-text { margin-left: 9px; padding-bottom: 3px; }

.scrollbar { width: 18px; margin-left: auto; flex: none; background: #ecedf1; display: flex; flex-direction: column; align-items: center; padding-top: 8px; }
.sb-top { width: 9px; height: 14px; border-top: 6px solid #bbb; border-bottom: 3px solid #bbb; }
.sb-pill { width: 18px; height: 22px; border-radius: 8px; background: #c5c6ca; margin-top: 10px; flex: none; }
.sb-thumb { margin-top: 148px; display: flex; flex-direction: column; align-items: center; flex: none; width: 14px; }
.sb-dark { width: 11px; height: 65px; background: #5b5c60; border-radius: 5px 5px 0 0; }
.sb-green { width: 11px; height: 20px; background: repeating-linear-gradient(#3d8f66 0 2px, #8fc4a8 2px 4px); border-radius: 0 0 5px 5px; }
.sb-light { width: 14px; height: 32px; background: #d0d1d6; border-radius: 0 0 4px 4px; }
.sb-pill-low { margin-top: auto; }
.sb-dbl { width: 12px; height: 14px; margin-top: 7px; background: linear-gradient(#999, #aaa); clip-path: polygon(50% 0, 100% 45%, 0 45%, 50% 50%, 100% 100%, 0 100%); flex: none; }
.sb-square { width: 9px; height: 9px; border: 1.500px solid #888; border-radius: 2px; margin: 17px 0 40px; flex: none; }

/* status bar */
.statusbar { height: 43px; flex: none; display: flex; align-items: center; background: #fbfbfb; border-top: 1px solid #f0f0f0; padding-left: 14px; position: relative; z-index: 1; }
.st-left { display: flex; align-items: center; color: #444; }
.st-page { width: 118px; letter-spacing: .4px; }
.st-count { width: 121px; letter-spacing: .4px; }
.st-tool { display: flex; align-items: center; gap: 3px; width: 129px; }
.st-proof { width: 127px; }
.st-compat { display: block; }
.st-right { margin-left: auto; display: flex; align-items: center; padding-right: 68px; }
.views { display: flex; gap: 4px; margin-left: 27px; }
.view { width: 35px; height: 36px; display: flex; align-items: center; justify-content: center; }
.view-on { background: #e5e6e9; }
.ic-fit { margin-left: 29px; }
.zoomval { display: flex; align-items: center; margin-left: 13px; color: #666; width: 66px; letter-spacing: .6px; }
.zoomval .caret { margin: 0 0 0 6px; }
.zoom-minus { width: 15px; height: 3px; background: #444; margin-left: 15px; }
.slider { position: relative; width: 209px; height: 2px; margin-left: 18px; background: linear-gradient(90deg, #666 0 93px, #e0e1e3 93px); }
.knob { position: absolute; left: 92px; top: -8px; width: 18px; height: 18px; border: 1.500px solid #666; border-radius: 50%; background: #eeeff1; }
.zoom-plus { width: 12px; height: 12px; margin-left: 13px; }

/* taskbar */
.taskbar { height: 60px; flex: none; display: flex; align-items: center; background: #25323b; color: #eef0f2; padding-right: 27px; position: relative; }
.taskbar::after { content: ""; position: absolute; right: 7px; top: 0; bottom: 0; width: 1px; background: #56616a; }
.tb-left { display: flex; gap: 3px; }
.tb-cell { width: 72px; height: 60px; display: flex; align-items: center; justify-content: center; position: relative; }
.tb-shift { margin-left: 6px; }
.tb-active { background: #4a555e; }
.tb-run::after, .tb-active::after { content: ""; position: absolute; left: 5px; right: 5px; bottom: 0; height: 3px; background: #6aa5d8; }
.tb-active::after { left: 0; right: 0; }
.tb-ic { width: 25px; height: 25px; }
.tb-ic-fan { width: 32px; height: 32px; }
.tb-ic-app { width: 36px; height: 36px; overflow: visible; }
.ie-e { font-family: "Liberation Sans", sans-serif; font-size: 46px; font-weight: 700; font-style: italic; fill: #2a97e0; }
.se-e { font-family: "Liberation Sans", sans-serif; font-size: 30px; font-weight: 700; fill: #67b83c; }
.tray { margin-left: auto; display: flex; align-items: center; }
.temp { width: 72px; height: 60px; display: flex; flex-direction: column; align-items: center; justify-content: center; position: relative; line-height: 27px; white-space: nowrap; margin-right: 6px; color: #e8eaec; }
.temp-ic { position: absolute; left: 20px; top: 20px; width: 34px; height: 28px; }
.tray-icons { display: flex; align-items: center; gap: 12px; }
.tr { width: 24px; height: 24px; flex: none; }
.tr-ime { display: flex; align-items: center; justify-content: center; font-size: 20px; color: #fff; }
.tr-q { margin-left: 6px; }
.clock { width: 94px; margin-left: 22px; display: flex; flex-direction: column; align-items: flex-end; line-height: 25px; font-size: 19px; white-space: nowrap; color: #f0f2f4; }
.notif { width: 24px; height: 32px; margin-left: 31px; }

/* overlays */
.red-dot { position: absolute; left: 1955px; top: 1023px; width: 6px; height: 6px; border-radius: 50%; background: #e01818; }
.red-blob { position: absolute; left: 1995px; top: 1059px; width: 24px; height: 21px; background: #d81010; border-radius: 3px; }
.watermark { position: absolute; left: 1925px; top: 1048px; font-family: "Liberation Sans", sans-serif; font-size: 19.400px; line-height: 26px; color: rgba(205,205,205,.82); white-space: nowrap; }
.wm-tight { letter-spacing: -2px; }
.assistant { position: absolute; left: 1957px; top: 945px; width: 74px; height: 74px; border: 3px solid #3f82d6; border-radius: 50%; background: #e4e5e9; overflow: hidden; }
.assist-art { display: block; width: 100%; height: 100%; filter: blur(1.500px); }
.mouse { position: absolute; left: 2022px; top: 676px; width: 14px; height: 22px; clip-path: inset(0 5px 0 0); }
```
